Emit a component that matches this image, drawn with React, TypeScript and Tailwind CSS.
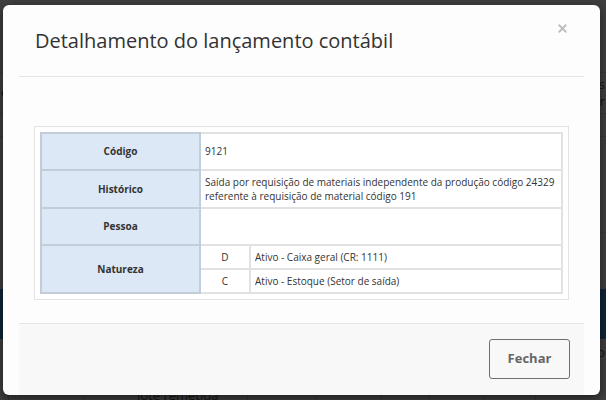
import { X } from "lucide-react";

const bottomCols = [8, 83, 215, 247, 315, 381, 429, 483, 535];

function BackgroundPage() {
  return (
    <div className="flex h-[400px] flex-col bg-[#3e3e3e] text-[13px] text-[#151515]">
      <div className="h-[73px] border-b border-[#363636]" />
      <div className="flex h-[41px] items-center justify-between border-b border-[#353535] px-[1px]">
        <span>e</span>
        <span className="flex flex-col items-end leading-[17px]">
          <span>es</span>
          <span>r</span>
        </span>
      </div>
      <div className="h-[23px] border-b border-[#353535]" />
      <div className="h-[96px] border-b border-[#393939]" />
      <div className="h-[56px]" />
      <div className="h-[50px] bg-[#0d2438]" />
      <div className="flex h-[55px] justify-end px-[1px] pt-[4px]">
        <span>o</span>
      </div>
      <div className="flex h-[6px] items-start">
        {bottomCols.map((x, i) => (
          <div
            key={i}
            className="h-full border-l border-[#333]"
            style={{ marginLeft: i === 0 ? x : x - bottomCols[i - 1] - 1 }}
          />
        ))}
      </div>
    </div>
  );
}

export default function App() {
  return (
    <div className="relative h-[400px] w-[606px] overflow-hidden font-['Open_Sans',sans-serif]">
      <BackgroundPage />
      <span className="absolute left-[137px] top-[388px] text-[13px] leading-[14px] text-[#151515]">
        lote remetida
      </span>

      {/* Modal */}
      <div className="absolute left-[3px] top-[5px] flex h-[390px] w-[597px] flex-col rounded-[6px] bg-[#fdfdfd] shadow-[0_3px_9px_rgba(0,0,0,0.5)]">
        <button className="absolute right-[31px] top-[17px] text-[#bdbdbd]">
          <X size={13} strokeWidth={3.4} />
        </button>

        <div className="mx-4 flex h-[72px] items-center border-b border-[#e5e5e5] pl-4">
          <h4 className="text-[20px] text-[#333]">Detalhamento do lançamento contábil</h4>
        </div>

        <div className="mx-4 px-[15px] pb-[23px] pt-[49px]">
          <div className="border border-[#e3e3e3] bg-white p-[5px]">
            <table className="w-full border-collapse text-[10px] text-[#333]">
              <tbody>
                <tr className="h-[37px]">
                  <th className="w-[159px] border-2 border-[#c3cdd8] bg-[#dce8f5] font-bold">
                    Código
                  </th>
                  <td colSpan={2} className="border-2 border-[#e2e2e2] px-[4px]">
                    9121
                  </td>
                </tr>
                <tr className="h-[38px]">
                  <th className="border-2 border-[#c3cdd8] bg-[#dce8f5] font-bold">Histórico</th>
                  <td colSpan={2} className="border-2 border-[#e2e2e2] px-[4px] leading-[14px]">
                    Saída por requisição de materiais independente da produção código 24329
                    <br />
                    referente à requisição de material código 191
                  </td>
                </tr>
                <tr className="h-[37px]">
                  <th className="border-2 border-[#c3cdd8] bg-[#dce8f5] font-bold">Pessoa</th>
                  <td colSpan={2} className="border-2 border-[#e2e2e2]" />
                </tr>
                <tr className="h-[24px]">
                  <th rowSpan={2} className="border-2 border-[#c3cdd8] bg-[#dce8f5] font-bold">
                    Natureza
                  </th>
                  <td className="w-[50px] border-2 border-[#e2e2e2] text-center">D</td>
                  <td className="border-2 border-[#e2e2e2] px-[4px]">Ativo - Caixa geral (CR: 1111)</td>
                </tr>
                <tr className="h-[24px]">
                  <td className="border-2 border-[#e2e2e2] text-center">C</td>
                  <td className="border-2 border-[#e2e2e2] px-[4px]">Ativo - Estoque (Setor de saída)</td>
                </tr>
              </tbody>
            </table>
          </div>
        </div>

        <div className="mx-4 flex flex-1 items-start justify-end border-t border-[#e5e5e5] bg-[#f8f8f8] pr-[14px] pt-[15px]">
          <button className="h-[40px] w-[81px] rounded-[3px] border border-[#6f6f6f] text-[13px] font-bold text-[#666]">
            Fechar
          </button>
        </div>
      </div>
    </div>
  );
}
